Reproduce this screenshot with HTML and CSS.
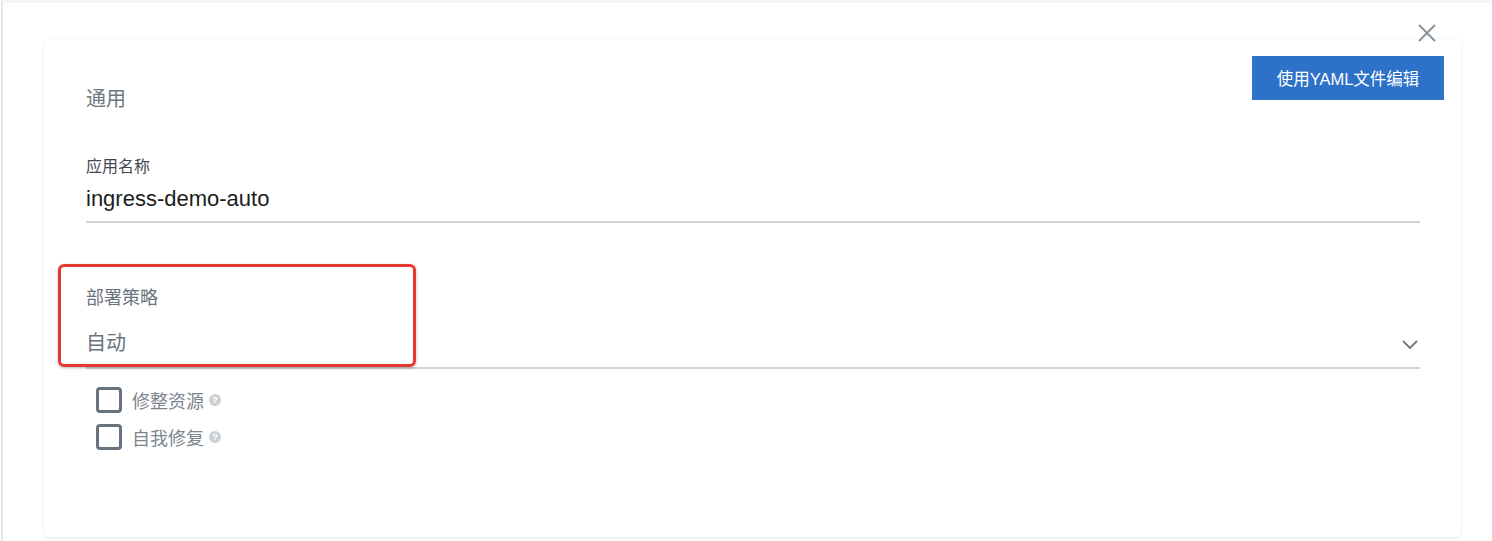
FILE: index.html
```html
<!DOCTYPE html>
<html lang="zh-CN">
<head>
    <meta charset="UTF-8">
    <meta name="viewport" content="width=device-width, initial-scale=1.0">
    <title>创建应用</title>
    <link rel="stylesheet" href="styles.css">
</head>
<body>
<div class="page">
    <button class="close-btn" aria-label="关闭">
        <svg width="18" height="18" viewBox="0 0 18 18">
            <path d="M1 1 L17 17 M17 1 L1 17" stroke="#8a939c" stroke-width="2" fill="none"/>
        </svg>
    </button>

    <div class="card">
        <div class="card-header">
            <h2 class="section-title">通用</h2>
            <button class="yaml-btn">使用YAML文件编辑</button>
        </div>

        <div class="form">
            <div class="field">
                <label class="field-label">应用名称</label>
                <div class="field-value">ingress-demo-auto</div>
            </div>

            <div class="field field-select">
                <label class="field-label">部署策略</label>
                <div class="field-value">
                    <span>自动</span>
                    <svg class="chevron" width="16" height="9" viewBox="0 0 16 9">
                        <path d="M1 1 L8 8 L15 1" stroke="#6b7784" stroke-width="1.8" fill="none"/>
                    </svg>
                </div>
                <div class="highlight"></div>
            </div>

            <div class="check-list">
                <div class="check-row">
                    <span class="check-box"></span>
                    <span class="check-label">修整资源</span>
                    <span class="help">?</span>
                </div>
                <div class="check-row">
                    <span class="check-box"></span>
                    <span class="check-label">自我修复</span>
                    <span class="help">?</span>
                </div>
            </div>
        </div>
    </div>
</div>
</body>
</html>
```

FILE: styles.css
```css
* {
    margin: 0;
    padding: 0;
    box-sizing: border-box;
}

body {
    font-family: 'Liberation Sans', 'Noto Sans CJK SC', sans-serif;
    background: #fff;
    height: 541px;
    overflow: hidden;
}

.page {
    position: relative;
    margin-left: 1px;
    height: 541px;
    border-left: 2px solid #e3e5e8;
    border-top: 3px solid #f3f4f6;
    padding: 37px 31px 0 41px;
}

.close-btn {
    position: absolute;
    top: 21px;
    right: 56px;
    width: 18px;
    height: 18px;
    border: none;
    background: none;
    display: flex;
}

.card {
    height: 497px;
    background: #fff;
    border-radius: 6px;
    box-shadow: 0 1px 4px rgba(0, 0, 0, 0.09);
    padding: 16px 17px 0 42px;
}

.card-header {
    display: flex;
    justify-content: space-between;
    align-items: flex-start;
}

.section-title {
    padding-top: 29px;
    font-size: 20px;
    line-height: 28px;
    font-weight: normal;
    color: #6f7880;
}

.yaml-btn {
    width: 192px;
    height: 44px;
    border: none;
    background: #2d71c8;
    color: #fff;
    font-family: inherit;
    font-size: 16.5px;
    cursor: pointer;
}

.form {
    margin-right: 24px;
}

.field {
    margin-top: 43px;
    padding-bottom: 7px;
    border-bottom: 2px solid #d3d4d6;
}

.field-label {
    display: block;
    font-size: 16px;
    line-height: 22px;
    color: #424850;
}

.field-value {
    margin-top: 6px;
    font-size: 22px;
    line-height: 30px;
    color: #1b1d20;
}

.field-select {
    position: relative;
    margin-top: 63px;
    padding-bottom: 10px;
}
.field-select .field-label {
    font-size: 18px;
    line-height: 24px;
    color: #6a737c;
}
.field-select .field-value {
    margin-top: 19px;
    font-size: 20px;
    line-height: 28px;
    color: #6a737c;
    display: flex;
    justify-content: space-between;
    align-items: center;
}
.chevron {
    margin-right: 2px;
    margin-top: 2px;
}

/* 标注框 */
.highlight {
    position: absolute;
    left: -28px;
    top: -22px;
    width: 358px;
    height: 103px;
    border: 3px solid #e5392f;
    border-radius: 6px;
    box-shadow: 0 1px 3px rgba(0, 0, 0, 0.3);
}

.check-list {
    margin-top: 12px;
}

.check-row {
    display: flex;
    align-items: center;
    height: 37px;
}

.check-box {
    width: 26px;
    height: 26px;
    margin-left: 10px;
    border: 3px solid #68737f;
    border-radius: 4px;
}

.check-label {
    margin-left: 10px;
    font-size: 18px;
    color: #7d868f;
}

.help {
    margin-left: 5px;
    width: 12px;
    height: 12px;
    border-radius: 50%;
    background: #ccd1d6;
    color: #fff;
    font-size: 9px;
    font-weight: bold;
    line-height: 12px;
    text-align: center;
}
```
